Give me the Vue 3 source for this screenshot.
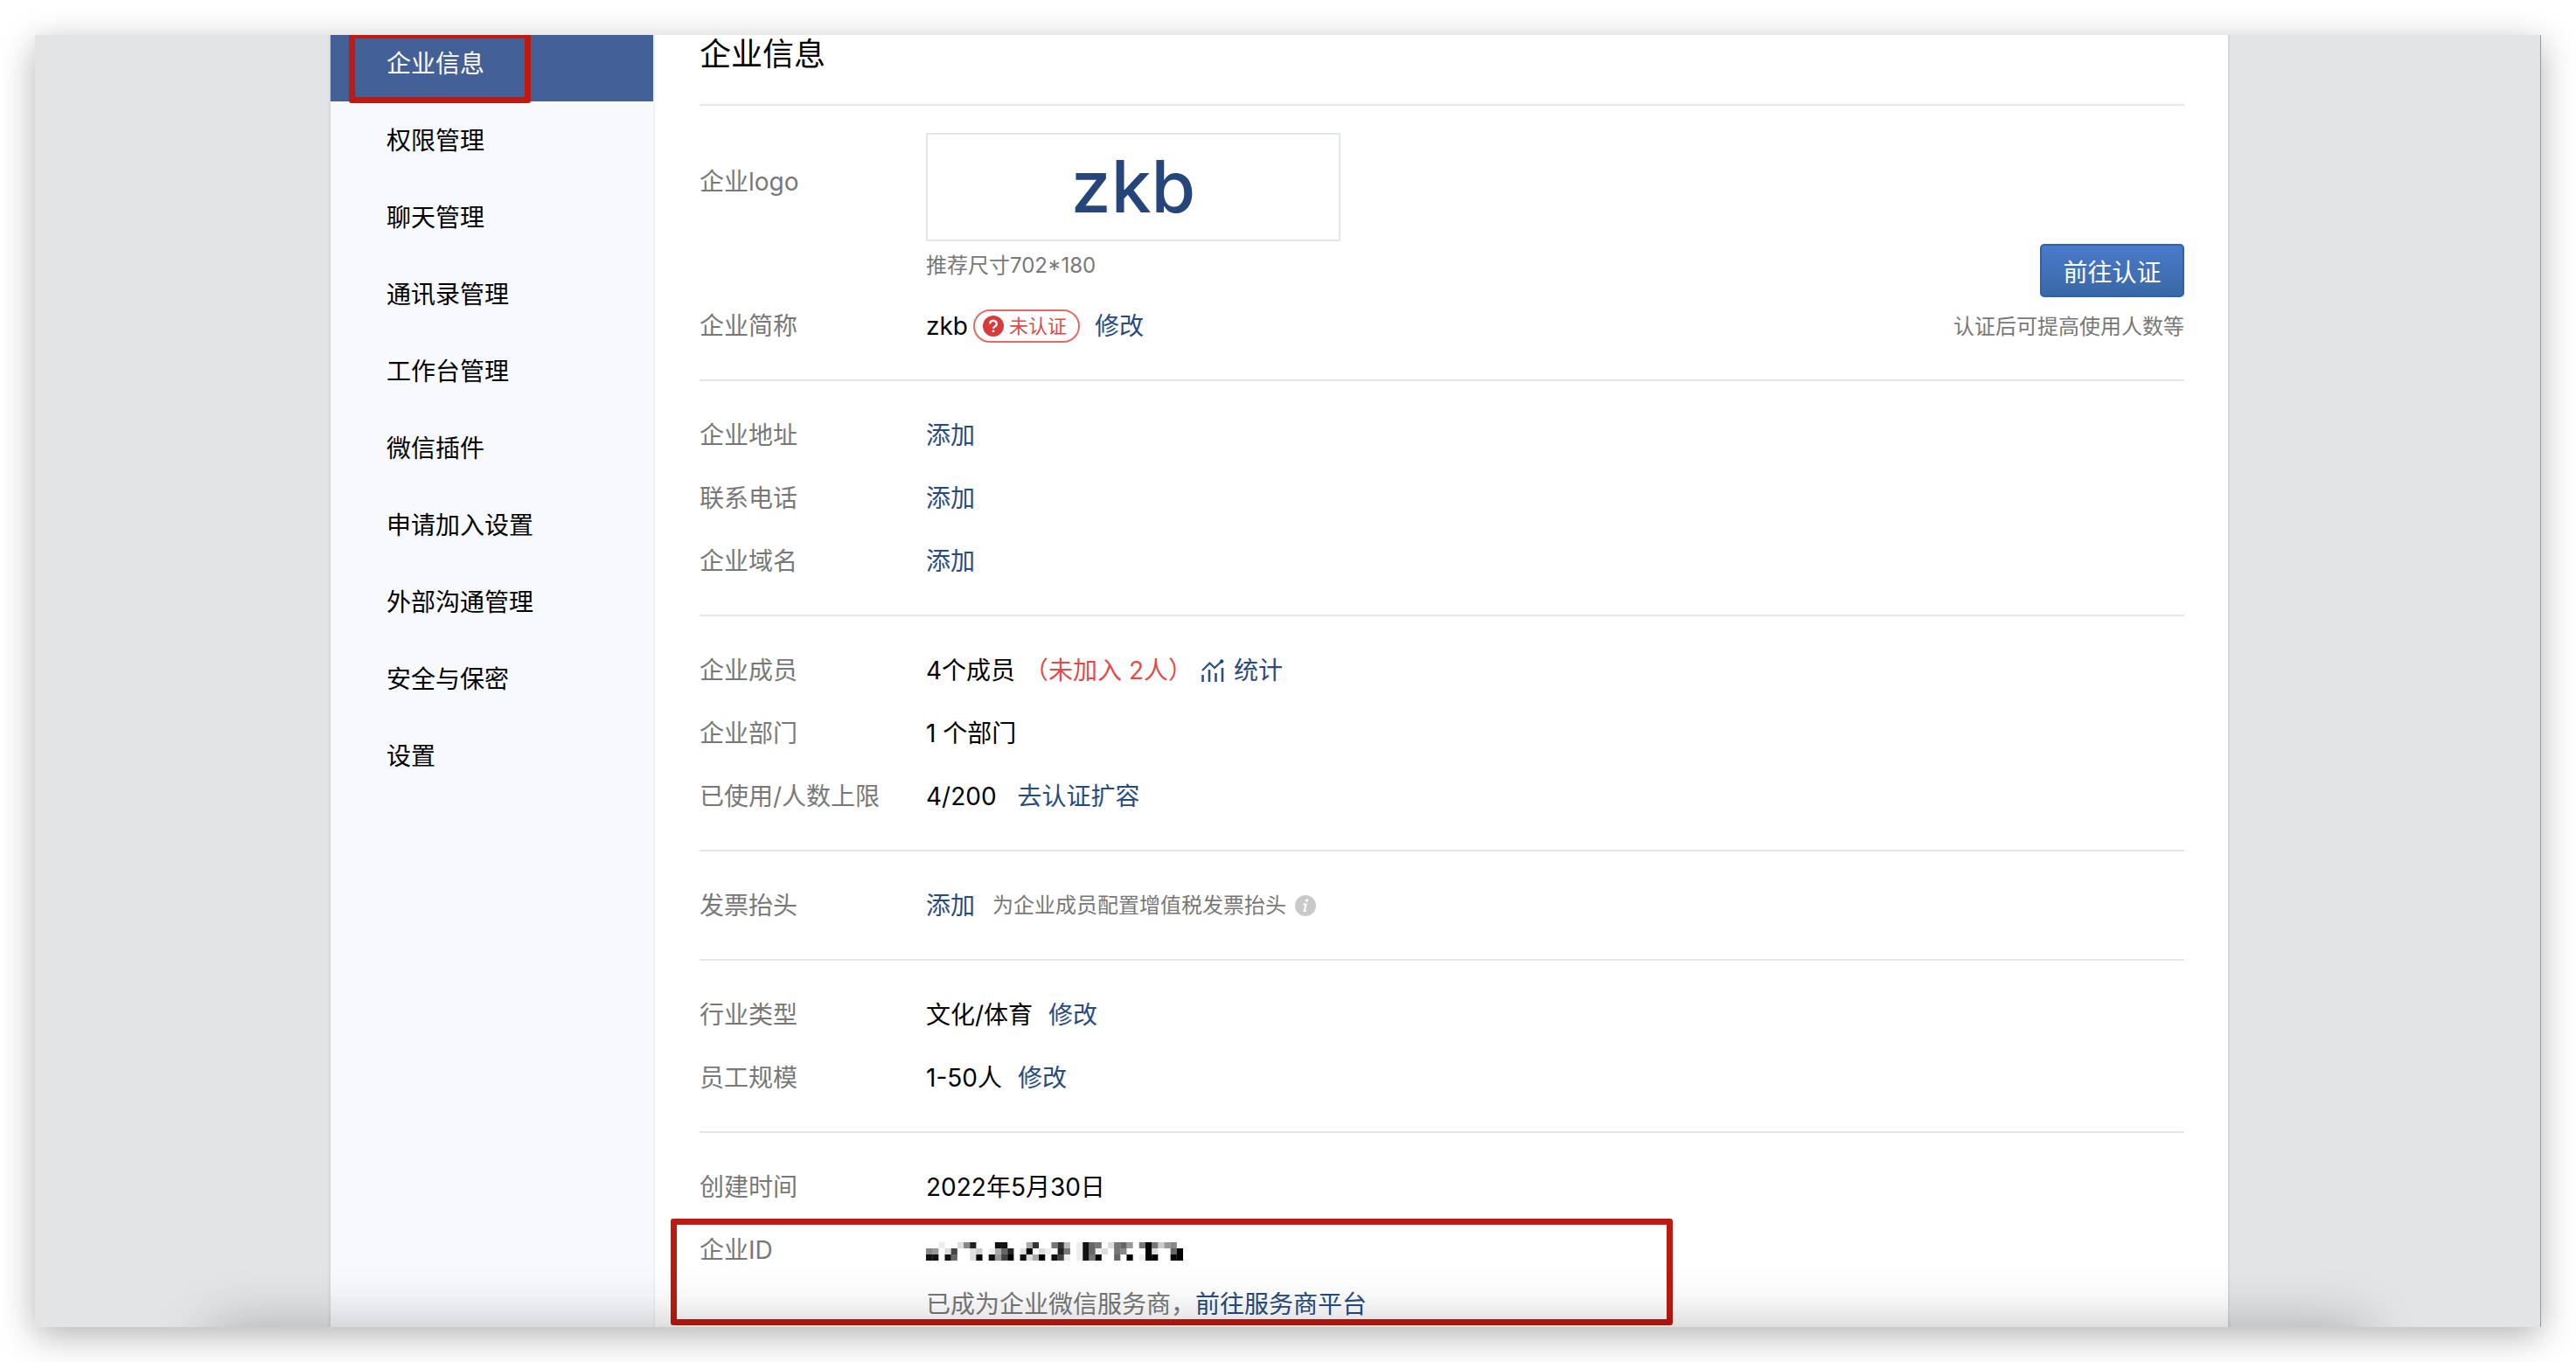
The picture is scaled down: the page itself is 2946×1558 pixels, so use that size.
<script setup>
const menu = [
  '企业信息',
  '权限管理',
  '聊天管理',
  '通讯录管理',
  '工作台管理',
  '微信插件',
  '申请加入设置',
  '外部沟通管理',
  '安全与保密',
  '设置',
]

// Masked company ID: one hex digit per mosaic cell, 0 = white, f = black
const mosaic = [
  '0010027d000ee0005c008c401e980289608f83670',
  '7602b0023015 9d02f0210d801e9120870 00f2009f'.replace(/ /g, ''),
  'ee0e9002f0e6bf0e25f0eb101e8f0090f01ff00ff',
]
const cells = mosaic.flatMap((row, y) =>
  [...row].map((c, x) => ({ x, y, o: parseInt(c, 16) / 15 })).filter((c) => c.o > 0),
)
</script>

<template>
  <div class="page">
    <div class="window">
      <div class="frame">
        <nav class="sidebar">
          <ul class="menu">
            <li v-for="(item, i) in menu" :key="item">
              <a href="#" class="menu-item" :class="{ active: i === 0 }">{{ item }}</a>
            </li>
          </ul>
        </nav>

        <main class="content">
          <h1 class="title">企业信息</h1>

          <section class="section first">
            <dl class="rows">
              <div class="row logo-row">
                <dt>企业logo</dt>
                <dd class="stack">
                  <div class="logo">zkb</div>
                  <p class="hint logo-hint">推荐尺寸702*180</p>
                </dd>
              </div>
              <div class="row">
                <dt>企业简称</dt>
                <dd class="name">
                  <span>zkb</span>
                  <span class="badge">
                    <svg width="24" height="24" viewBox="0 0 24 24" aria-hidden="true">
                      <circle cx="12" cy="12" r="12" fill="#d63c3c" />
                      <path d="M8.2 9.4a3.8 3.5 0 1 1 5.6 3c-1.2.6-1.8 1.2-1.8 2.4" fill="none" stroke="#fff" stroke-width="2.2" />
                      <circle cx="12" cy="17.8" r="1.4" fill="#fff" />
                    </svg>
                    未认证
                  </span>
                  <a href="#" class="after-badge">修改</a>
                </dd>
              </div>
            </dl>
            <div class="verify">
              <button type="button" class="button">前往认证</button>
              <p class="hint">认证后可提高使用人数等</p>
            </div>
          </section>

          <section class="section">
            <dl class="rows">
              <div class="row"><dt>企业地址</dt><dd><a href="#">添加</a></dd></div>
              <div class="row"><dt>联系电话</dt><dd><a href="#">添加</a></dd></div>
              <div class="row"><dt>企业域名</dt><dd><a href="#">添加</a></dd></div>
            </dl>
          </section>

          <section class="section">
            <dl class="rows">
              <div class="row">
                <dt>企业成员</dt>
                <dd class="members">
                  <span>4个成员</span>
                  <span class="warn">（未加入 2人）</span>
                  <a href="#" class="stats">
                    <svg width="26" height="26" viewBox="0 0 26 26" aria-hidden="true" fill="none" stroke="#2b4f82">
                      <path d="M1 13 9.5 4.5 15 10 23 2.5" stroke-width="2.2" />
                      <path d="M1.500 18v8M9 12v14M16.5 16v10M24 10v16" stroke-width="2.6" />
                      <circle cx="23.2" cy="2.5" r="1.8" fill="#1f3f73" />
                    </svg>
                    统计
                  </a>
                </dd>
              </div>
              <div class="row"><dt>企业部门</dt><dd>1 个部门</dd></div>
              <div class="row">
                <dt>已使用/人数上限</dt>
                <dd><span>4/200</span><a href="#" class="expand">去认证扩容</a></dd>
              </div>
            </dl>
          </section>

          <section class="section">
            <dl class="rows">
              <div class="row">
                <dt>发票抬头</dt>
                <dd>
                  <a href="#">添加</a>
                  <span class="hint invoice">
                    为企业成员配置增值税发票抬头
                    <svg width="24" height="24" viewBox="0 0 24 24" aria-hidden="true">
                      <circle cx="12" cy="12" r="12" fill="#c9c9c9" />
                      <circle cx="13.5" cy="6" r="1.8" fill="#fff" />
                      <path d="M9.5 10.5h3l-1.8 7.5h2.3" fill="none" stroke="#fff" stroke-width="2" />
                    </svg>
                  </span>
                </dd>
              </div>
            </dl>
          </section>

          <section class="section">
            <dl class="rows">
              <div class="row"><dt>行业类型</dt><dd><span>文化/体育</span><a href="#">修改</a></dd></div>
              <div class="row"><dt>员工规模</dt><dd><span>1-50人</span><a href="#">修改</a></dd></div>
            </dl>
          </section>

          <section class="section last">
            <dl class="rows">
              <div class="row"><dt>创建时间</dt><dd>2022年5月30日</dd></div>
              <div class="row id-row">
                <dt>企业ID</dt>
                <dd class="stack">
                  <div class="id-value">
                    <svg width="294" height="21" viewBox="0 0 41 3" preserveAspectRatio="none" role="img">
                      <rect v-for="c in cells" :key="`${c.x}-${c.y}`" :x="c.x" :y="c.y" width="1" height="1" :fill-opacity="c.o" />
                    </svg>
                  </div>
                  <p class="provider">已成为企业微信服务商，<a href="#">前往服务商平台</a></p>
                </dd>
              </div>
            </dl>
          </section>
        </main>
      </div>
      <div class="bottom-shade"></div>
    </div>
  </div>
</template>

<style>
body {
  margin: 0;
  background: #fff;
}
</style>

<style scoped>
.page {
  box-sizing: border-box;
  min-height: 100vh;
  padding: 40px;
  display: flex;
  overflow: hidden;
  font-family: Inter, 'Noto Sans CJK SC', sans-serif;
  font-size: 28px;
  color: #000;
}

.window {
  flex: 1;
  min-width: 0;
  position: relative;
  display: grid;
  grid-template-columns: minmax(0, 338fr) minmax(0, 2170px) minmax(0, 358fr);
  background: #e3e4e6;
  box-shadow: 0 10px 38px rgba(0, 0, 0, 0.3);
}

.window::after {
  content: '';
  position: absolute;
  inset: 0;
  border-right: 1px solid #999;
  pointer-events: none;
}

.frame {
  grid-column: 2;
  display: flex;
  background: #fff;
  box-shadow: 0 0 4px rgba(0, 0, 0, 0.16);
  clip-path: inset(0 -6px);
}

.sidebar {
  box-sizing: border-box;
  flex: none;
  width: 371px;
  overflow: hidden;
  background: #f7f9fc;
  border-right: 2px solid #edf1f5;
}

/* The list is scrolled slightly under the top edge */
.menu {
  list-style: none;
  margin: -12px -2px 0 0;
  padding: 0;
}

.menu-item {
  display: block;
  position: relative;
  padding: 2px 0 0 64px;
  line-height: 86px;
  color: #000;
}

.menu-item.active {
  background: #446197;
  color: #fff;
}

.menu-item.active::after {
  content: '';
  position: absolute;
  box-sizing: border-box;
  top: 9px;
  bottom: -2px;
  left: 21px;
  width: 208px;
  border: 7px solid #bd1a12;
  border-radius: 3px;
}

.menu li:first-child {
  position: relative;
  z-index: 1;
}

.content {
  flex: 1;
  min-width: 0;
  padding: 0 50px 0 51px;
}

.title {
  margin: 0;
  padding-bottom: 35px;
  line-height: 44px;
  font-size: 36px;
  font-weight: 400;
}

.section {
  display: flex;
  justify-content: space-between;
  padding: 26px 0 25px;
  border-top: 2px solid #e4e7ea;
}

.section.first {
  padding-top: 31px;
}

.section.last {
  padding-bottom: 0;
}

.rows {
  flex: 1;
  margin: 0;
}

.row {
  display: flex;
  line-height: 72px;
}

dt {
  flex: none;
  width: 259px;
  color: #787878;
}

dd {
  margin: 0;
  display: flex;
  align-items: center;
  gap: 18px;
}

a {
  color: #274b80;
  text-decoration: none;
}

p {
  margin: 0;
}

.stack {
  display: block;
}

.logo-row dt {
  padding-top: 20px;
}

.logo {
  box-sizing: border-box;
  width: 474px;
  height: 124px;
  border: 2px solid #e4e7ea;
  line-height: 120px;
  text-align: center;
  font-size: 82px;
  font-weight: 500;
  color: #26457a;
}

.hint {
  font-size: 24px;
  color: #787878;
}

.logo-hint {
  line-height: 56px;
  padding-bottom: 5px;
}

.name {
  gap: 6px;
}

.badge {
  box-sizing: border-box;
  display: flex;
  align-items: center;
  gap: 6px;
  height: 38px;
  padding: 0 13px 0 9px;
  border: 2px solid #e26a6a;
  border-radius: 19px;
  line-height: 34px;
  font-size: 22px;
  color: #d94a4a;
}

.after-badge {
  margin-left: 11px;
}

.verify {
  display: flex;
  flex-direction: column;
  align-items: flex-end;
  padding-top: 127px;
}

.verify .hint {
  line-height: 68px;
}

.button {
  box-sizing: border-box;
  width: 165px;
  height: 61px;
  padding: 0;
  border: 2px solid #2c62b0;
  border-radius: 5px;
  background: linear-gradient(#4a7acb, #3a68a5);
  color: #fff;
  font: inherit;
}

.members {
  gap: 10px;
}

.warn {
  color: #e04b48;
}

.stats {
  display: flex;
  align-items: center;
  gap: 11px;
}

.expand {
  margin-left: 6px;
}

.invoice {
  display: flex;
  align-items: center;
  gap: 10px;
  margin-left: 2px;
}

.id-row {
  position: relative;
}

.id-row::after {
  content: '';
  position: absolute;
  box-sizing: border-box;
  top: 0;
  bottom: 0;
  left: -33px;
  width: 1146px;
  border: 7px solid #bd1a12;
  border-radius: 3px;
  pointer-events: none;
}

.id-value {
  display: flex;
  align-items: center;
  height: 74px;
}

.provider {
  line-height: 48px;
  color: #787878;
}

/* Soft shade rising from below the bottom edge */
.bottom-shade {
  position: absolute;
  inset: 0;
  overflow: hidden;
  pointer-events: none;
}

.bottom-shade::after {
  content: '';
  position: absolute;
  top: 100%;
  left: 7%;
  right: 7%;
  height: 120px;
  box-shadow: 0 0 64px rgba(0, 0, 0, 0.26);
}
</style>
